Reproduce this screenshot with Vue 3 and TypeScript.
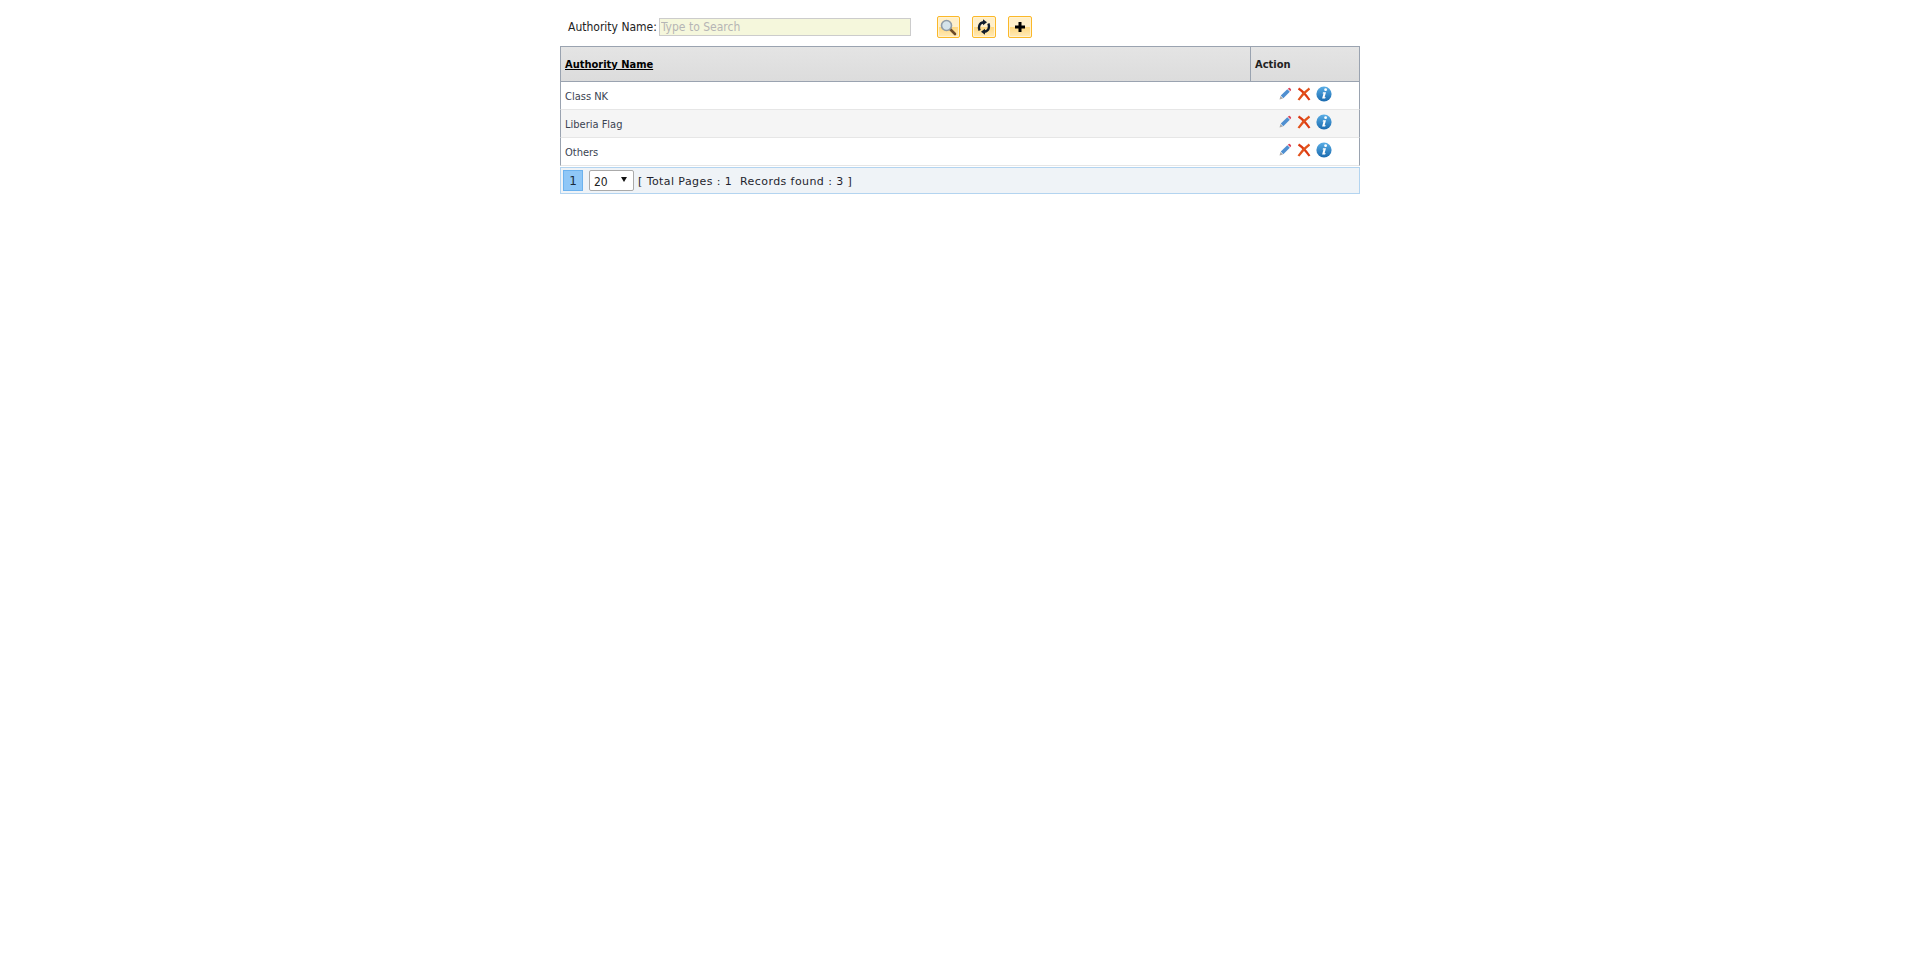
<script setup lang="ts">
/** Data */
const rows: string[] = ['Class NK', 'Liberia Flag', 'Others'];
</script>

<template>
    <div class="page">
        <div class="search">
            <label class="search-label">Authority Name:</label>
            <input class="search-input" type="text" placeholder="Type to Search">
            <div class="search-buttons">
                <button class="tool-btn btn-find" type="button">
                    <svg width="18" height="18" viewBox="0 0 18 18">
                        <line x1="11" y1="11" x2="16" y2="16" stroke="#6b4a2a" stroke-width="2.6" stroke-linecap="round"/>
                        <circle cx="7.5" cy="7.5" r="5" fill="#d5e3ea" stroke="#8f9ba6" stroke-width="1.6"/>
                    </svg>
                </button>
                <button class="tool-btn btn-reset" type="button">
                    <svg width="16" height="16" viewBox="0 0 16 16" fill="none">
                        <path d="M3.6 11.5 C2.2 8 3 4 7.5 3.2" stroke="#111c2b" stroke-width="2.4"/>
                        <path d="M7 0.3 L11 3.2 L7 6.2 Z" fill="#111c2b"/>
                        <path d="M12.4 4.5 C13.8 8 13 12 8.5 12.8" stroke="#111c2b" stroke-width="2.4"/>
                        <path d="M9 15.7 L5 12.8 L9 9.8 Z" fill="#111c2b"/>
                    </svg>
                </button>
                <button class="tool-btn btn-add" type="button">
                    <svg width="12" height="12" viewBox="0 0 12 12">
                        <path d="M4.5 1 H7.5 V4.5 H11 V7.5 H7.5 V11 H4.5 V7.5 H1 V4.5 H4.5 Z" fill="#000"/>
                    </svg>
                </button>
            </div>
        </div>

        <table class="grid">
            <thead>
                <tr>
                    <th class="col-name"><a class="sort-link">Authority Name</a></th>
                    <th class="col-action">Action</th>
                </tr>
            </thead>
            <tbody>
                <tr v-for="(row, index) in rows" :key="row" :class="{ alt: index % 2 === 1 }">
                    <td class="cell-name">{{ row }}</td>
                    <td class="cell-action">
                        <span class="actions">
                            <svg width="14" height="14" viewBox="0 0 14 14">
                                <path d="M1.5 12.5 L2.5 9 L5 11.5 Z" fill="#a9a9a9"/>
                                <path d="M2.8 8.6 L9.3 2.2 L11.8 4.7 L5.3 11.2 Z" fill="#4f8fd0"/>
                                <path d="M9.8 1.7 L10.8 0.9 Q11.4 0.6 11.9 1 L13 2.2 Q13.3 2.8 13 3.3 L12.3 4.2 Z" fill="#d9455a"/>
                            </svg>
                            <svg width="14" height="14" viewBox="0 0 14 14">
                                <path d="M1.5 1.5 Q7 5 12.5 13" fill="none" stroke="#dd3a12" stroke-width="2.2"/>
                                <path d="M12.5 1.5 Q6 6 1.5 13" fill="none" stroke="#e2531c" stroke-width="2.2"/>
                            </svg>
                            <svg width="16" height="16" viewBox="0 0 16 16">
                                <defs>
                                    <linearGradient id="info-fill" x1="0" y1="0" x2="0" y2="1">
                                        <stop offset="0" stop-color="#5aaee6"/>
                                        <stop offset="1" stop-color="#1a6aae"/>
                                    </linearGradient>
                                </defs>
                                <circle cx="8" cy="8" r="7.6" fill="url(#info-fill)"/>
                                <circle cx="9.6" cy="3.7" r="1.4" fill="#fff"/>
                                <path d="M7 6.2 H10 L8.6 11.2 H9.8 L9.1 12.6 H6.1 L7.5 7.5 H6.6 Z" fill="#fff"/>
                            </svg>
                        </span>
                    </td>
                </tr>
            </tbody>
        </table>

        <div class="pager">
            <span class="page-current">1</span>
            <span class="page-size">20<span class="page-arrow"></span></span>
            <span class="page-info">[ Total Pages : 1&nbsp; Records found : 3 ]</span>
        </div>
    </div>
</template>

<style>
html, body {
    background: #fff;
}
</style>

<style scoped>
.page {
    width: 800px;
    margin: 0 auto;
    font-family: "DejaVu Sans Condensed", "DejaVu Sans", "Liberation Sans", sans-serif;
    font-size: 11px;
    color: #333;
}

.search {
    display: flex;
    align-items: center;
    height: 46px;
    padding: 8px 0 0 8px;
    box-sizing: border-box;
}

.search-label {
    font-size: 12px;
    color: #222;
    margin-right: 2px;
}

.search-input {
    width: 252px;
    height: 18px;
    box-sizing: border-box;
    border: 1px solid #ccc;
    background: #f5f7dc;
    padding: 0 1px;
    font: inherit;
    font-size: 12px;
    outline: none;
}

.search-input::placeholder {
    color: #b5b5b5;
}

.search-buttons {
    display: flex;
    gap: 12px;
    margin-left: 26px;
}

.tool-btn {
    display: flex;
    align-items: center;
    justify-content: center;
    width: 24px;
    height: 22px;
    padding: 0;
    border: 1px solid #fbb829;
    border-radius: 2px;
    box-shadow: inset 0 0 0 1px #fff2d2;
    background: linear-gradient(#ffeec6 0, #fff0cc 48%, #ffd983 52%, #ffeab8 100%);
}

.btn-find {
    width: 23px;
}

.grid {
    width: 800px;
    border-collapse: separate;
    border-spacing: 0;
    table-layout: fixed;
}

.grid th {
    height: 36px;
    padding: 0 4px;
    box-sizing: border-box;
    text-align: left;
    font-size: 11px;
    color: #222;
    background: linear-gradient(#e4e4e4, #dcdcdc);
    border-top: 1px solid #9aa3b0;
    border-bottom: 1px solid #9aa3b0;
}

.col-name {
    border-left: 1px solid #9aa3b0;
    border-right: 1px solid #9aa3b0;
}

.col-action {
    width: 109px;
    border-right: 1px solid #9aa3b0;
}

.sort-link {
    color: #000;
    text-decoration: underline;
}

.grid td {
    height: 28px;
    padding: 1px 4px 0;
    box-sizing: border-box;
    border-bottom: 1px solid #e6e6e6;
    font-size: 11px;
    color: #3a4352;
}

.cell-name {
    border-left: 1px solid #9aa3b0;
}

.cell-action {
    border-right: 1px solid #9aa3b0;
}

.alt td {
    background: #f5f5f5;
}

.actions {
    display: flex;
    align-items: center;
    justify-content: center;
    gap: 5px;
    margin-top: -5px;
}

.pager {
    display: flex;
    align-items: center;
    height: 27px;
    box-sizing: border-box;
    padding-left: 2px;
    margin-top: 1px;
    background: #eff3f7;
    border: 1px solid #b3d4f0;
}

.page-current {
    width: 20px;
    height: 21px;
    box-sizing: border-box;
    text-align: center;
    line-height: 20px;
    background: #8fc7f7;
    border: 1px solid #6cb2ee;
    color: #1a2a3a;
    font-family: "DejaVu Sans", sans-serif;
    font-size: 12px;
}

.page-size {
    position: relative;
    width: 45px;
    height: 21px;
    box-sizing: border-box;
    margin-left: 6px;
    padding-left: 4px;
    line-height: 22px;
    background: #fff;
    border: 1px solid #aaa;
    border-radius: 2px;
    font-size: 12px;
    color: #222;
}

.page-arrow {
    position: absolute;
    top: 6px;
    right: 6px;
    border-left: 3px solid transparent;
    border-right: 3px solid transparent;
    border-top: 5px solid #111;
}

.page-info {
    margin-left: 4px;
    padding-top: 1px;
    font-family: "DejaVu Sans", sans-serif;
    letter-spacing: 0.42px;
    color: #1f1f2e;
}
</style>
